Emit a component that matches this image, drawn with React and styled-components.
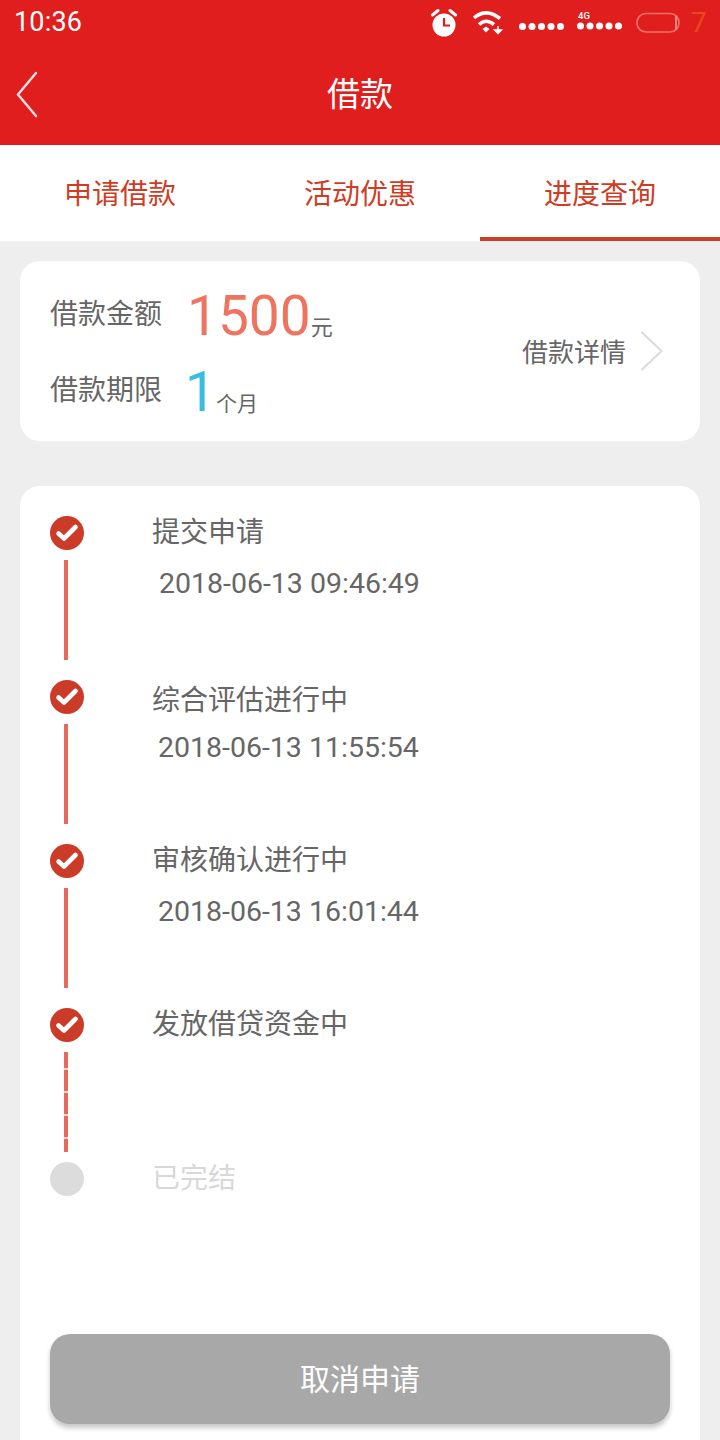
import React from 'react';
import styled, { createGlobalStyle } from 'styled-components';

const Global = createGlobalStyle`
  html, body { margin: 0; padding: 0; background: #eeeeee; }
  body { font-family: Roboto, "Noto Sans CJK SC", sans-serif; }
  * { box-sizing: border-box; }
`;
const CJK = `"Noto Sans CJK SC", sans-serif`;
const Page = styled.div`width: 720px; height: 1440px; overflow: hidden; background: #eeeeee; display: flex; flex-direction: column;`;
const Header = styled.header`flex: none; background: #e01e1e; height: 145px; color: #fff; display: flex; flex-direction: column;`;
const StatusBar = styled.div`height: 45px; display: flex; align-items: center; padding: 0 13px 0 14px; justify-content: space-between;`;
const Time = styled.span`font: 400 27px/1 Roboto, sans-serif; color: #fff; letter-spacing: .2px;`;
const BatteryLevel = styled.span`font: 400 28px/1 Roboto, sans-serif; color: #e8491c; width: 16px; margin-left: 11px;`;
const StatusIcons = styled.div`display: flex; align-items: center; height: 45px; gap: 0;`;
const StatusGlyph = styled.svg`display: block; flex: none; margin-left: ${p => p.$gap || 0}px;`;
const Nav = styled.div`height: 100px; display: flex; align-items: center; justify-content: center; position: relative; padding-bottom: 6px;`;
const Back = styled.svg`position: absolute; left: 14px; top: 26px;`;
const Title = styled.h1`margin: 0; font: 400 33px/1 ${CJK}; color: #fff;`;
const Tabs = styled.nav`flex: none; height: 96px; background: #fff; display: grid; grid-template-columns: repeat(3, 240px);`;
const Tab = styled.div`display: flex; align-items: center; justify-content: center; padding-top: 1px; font: 400 28px/1 ${CJK}; color: #cf3c24; border-bottom: 4px solid ${p => p.$active ? '#c9402a' : 'transparent'};`;
const Content = styled.main`flex: none; padding: 20px 20px 0; display: flex; flex-direction: column; gap: 45px;`;
const Summary = styled.section`height: 180px; background: #fff; border-radius: 20px; display: flex; align-items: center; justify-content: space-between; padding: 0 37px 0 30px;`;
const SummaryRows = styled.div`display: grid; grid-template-rows: 76px 76px;`;
const SummaryRow = styled.div`display: flex; align-items: center;`;
const Label = styled.span`width: 137px; font: 400 28px/1 ${CJK}; color: #666; margin-bottom: 2px;`;
const Figure = styled.div`display: flex; align-items: baseline; margin-top: 6px;`;
const Amount = styled.span`font: 400 55px/1 Roboto, sans-serif; color: ${p => p.$color}; margin-left: ${p => p.$shift || 0}px;`;
const Unit = styled.span`font: 400 ${p => p.$size}px/1 ${CJK}; color: #666; margin-left: ${p => p.$gap}px;`;
const Detail = styled.div`display: flex; align-items: center; gap: 14px; font: 400 26px/1 ${CJK}; color: #666;`;
const Progress = styled.section`background: #fff; border-radius: 20px 20px 0 0; height: 960px; padding: 30px 30px 0; display: flex; flex-direction: column;`;
const Step = styled.div`display: grid; grid-template-columns: 34px 1fr; column-gap: 68px; height: ${p => p.$h}px;`;
const Rail = styled.div`display: flex; flex-direction: column; align-items: center; gap: 10px;`;
const Dot = styled.div`width: 34px; height: 34px; border-radius: 50%; background: ${p => p.$done ? '#cc3a28' : '#dcdcdc'}; display: flex; align-items: center; justify-content: center; flex: none;`;
const Line = styled.div`width: 4px; height: 100px; margin-left: -3px; ${p => p.$dashed
  ? 'background: repeating-linear-gradient(to bottom, #e8695a 0 16px, #fbd9d2 16px 18px, #e8695a 18px 23px);'
  : 'background: #e8695a;'}`;
const StepBody = styled.div`display: flex; flex-direction: column; margin-top: ${p => p.$top}px;`;
const StepTitle = styled.div`font: 400 28px/32px ${CJK}; color: ${p => p.$muted ? '#d8d8d8' : '#666'};`;
const StepTime = styled.div`font: 400 28.5px/32px Roboto, sans-serif; color: #666; margin-top: ${p => p.$gap}px; padding-left: ${p => p.$indent}px;`;
const CancelButton = styled.button`flex: none; width: 620px; height: 90px; border: 0; border-radius: 20px; background: #a8a8a8; color: #fff; font: 400 30px/1 ${CJK}; box-shadow: 0 4px 5px rgba(0,0,0,.22); padding: 0 0 4px;`;

const Check = () => (
  <svg width="24" height="20" viewBox="0 0 24 20">
    <path d="M3.5 10.5 L9 15.5 L20.5 4" fill="none" stroke="#fff" strokeWidth="4.6" strokeLinecap="round" strokeLinejoin="round" />
  </svg>
);

const SIGNAL_X = [3.5, 13, 22.5, 32, 41.5];

const StatusCluster = () => (
  <StatusIcons>
    <StatusGlyph width="26" height="45" viewBox="0 0 26 45">
      <circle cx="13" cy="25" r="11.5" fill="#fff" />
      <path d="M13 18 V25.5 H19" fill="none" stroke="#e01e1e" strokeWidth="2.2" />
      <path d="M1.5 15 L7 10.5 M24.5 15 L19 10.5" stroke="#fff" strokeWidth="3" strokeLinecap="round" />
    </StatusGlyph>
    <StatusGlyph $gap={16} width="30" height="45" viewBox="0 0 30 45">
      <path d="M1 18 Q13 7.5 27 18.5" fill="none" stroke="#fff" strokeWidth="3.6" />
      <path d="M6 24.5 Q13 18 21 24.5" fill="none" stroke="#fff" strokeWidth="3.6" />
      <path d="M9.5 29 L13 26.5 L16.5 29 L13 32.5 Z" fill="#fff" />
      <path d="M25 26 V30 M21.5 30 H28.5 L25 33.5 Z" fill="#fff" stroke="#fff" strokeWidth="1.5" />
    </StatusGlyph>
    <StatusGlyph $gap={16} width="46" height="45" viewBox="0 0 46 45">
      {SIGNAL_X.map(x => <circle key={x} cx={x} cy="26.5" r="3.5" fill="#fff" />)}
    </StatusGlyph>
    <StatusGlyph $gap={12} width="45" height="45" viewBox="0 0 45 45">
      <text x="1" y="18.5" fontSize="9.5" fontWeight="500" fontFamily="Roboto, sans-serif" fill="#fff">4G</text>
      {SIGNAL_X.map(x => <circle key={x} cx={x} cy="26" r="3.5" fill="#fff" />)}
    </StatusGlyph>
    <StatusGlyph $gap={14} width="44" height="45" viewBox="0 0 44 45">
      <rect x="1" y="13.5" width="42" height="18.5" rx="9" fill="none" stroke="#f0736a" strokeWidth="1.6" />
      <path d="M40 16 V29.5" stroke="#f0a9a3" strokeWidth="1.4" />
    </StatusGlyph>
    <BatteryLevel>7</BatteryLevel>
  </StatusIcons>
);

const Chevron = () => (
  <svg width="23" height="42" viewBox="0 0 23 42">
    <path d="M1.5 2 L21.5 21 L1.5 40" fill="none" stroke="#dcdcdc" strokeWidth="2.2" />
  </svg>
);

const steps = [
  { title: '提交申请', time: '2018-06-13 09:46:49', h: 164, top: -2, gap: 22, indent: 7 },
  { title: '综合评估进行中', time: '2018-06-13 11:55:54', h: 164, top: 2, gap: 18, indent: 6 },
  { title: '审核确认进行中', time: '2018-06-13 16:01:44', h: 164, top: -2, gap: 22, indent: 6 },
  { title: '发放借贷资金中', h: 154, top: -2, dashed: true },
];

export default function App() {
  return (
    <Page>
      <Global />
      <Header>
        <StatusBar>
          <Time>10:36</Time>
          <StatusCluster />
        </StatusBar>
        <Nav>
          <Back width="26" height="48" viewBox="0 0 26 48">
            <path d="M22 2 L4 23.5 L22 45" fill="none" stroke="#fbe3e3" strokeWidth="2.4" strokeLinecap="round" />
          </Back>
          <Title>借款</Title>
        </Nav>
      </Header>
      <Tabs>
        <Tab>申请借款</Tab>
        <Tab>活动优惠</Tab>
        <Tab $active>进度查询</Tab>
      </Tabs>
      <Content>
        <Summary>
          <SummaryRows>
            <SummaryRow>
              <Label>借款金额</Label>
              <Figure>
                <Amount $color="#ee7460">1500</Amount>
                <Unit $size={22} $gap={0}>元</Unit>
              </Figure>
            </SummaryRow>
            <SummaryRow>
              <Label>借款期限</Label>
              <Figure>
                <Amount $color="#36bde0" $shift={-2}>1</Amount>
                <Unit $size={21} $gap={0}>个月</Unit>
              </Figure>
            </SummaryRow>
          </SummaryRows>
          <Detail>借款详情<Chevron /></Detail>
        </Summary>
        <Progress>
          {steps.map(s => (
            <Step key={s.title} $h={s.h}>
              <Rail>
                <Dot $done><Check /></Dot>
                <Line $dashed={s.dashed} />
              </Rail>
              <StepBody $top={s.top}>
                <StepTitle>{s.title}</StepTitle>
                {s.time && <StepTime $gap={s.gap} $indent={s.indent}>{s.time}</StepTime>}
              </StepBody>
            </Step>
          ))}
          <Step $h={172}>
            <Rail><Dot /></Rail>
            <StepBody $top={-2}><StepTitle $muted>已完结</StepTitle></StepBody>
          </Step>
          <CancelButton>取消申请</CancelButton>
        </Progress>
      </Content>
    </Page>
  );
}
